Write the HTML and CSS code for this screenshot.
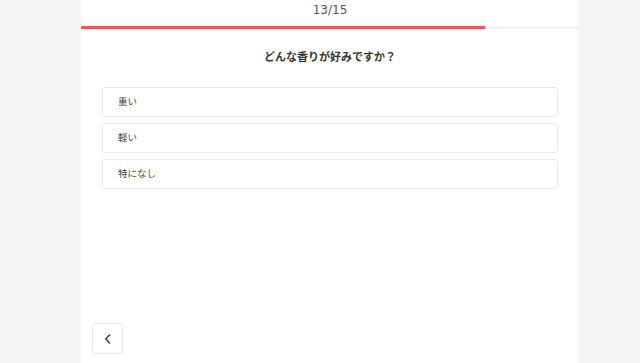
FILE: index.html
```html
<!DOCTYPE html>
<html lang="ja">
<head>
<meta charset="utf-8">
<link rel="stylesheet" href="styles.css">
</head>
<body>
<div class="panel">
  <div class="counter">13/15</div>
  <div class="track"><div class="fill" style="width:81.2%"></div></div>
  <h1 class="question">どんな香りが好みですか？</h1>
  <ul class="options">
    <li class="option">重い</li>
    <li class="option">軽い</li>
    <li class="option">特になし</li>
  </ul>
  <div class="spacer"></div>
  <div class="footer">
    <button class="back" aria-label="戻る">
      <svg width="10" height="12" viewBox="0 0 10 12"><path d="M7 1.5 L2.8 6 L7 10.5" fill="none" stroke="#444" stroke-width="1.5"/></svg>
    </button>
  </div>
</div>
</body>
</html>
```
FILE: styles.css
```css
html, body {
  margin: 0;
  padding: 0;
  height: 100%;
}
body {
  background: #f5f3f4;
  font-family: "DejaVu Sans", "Noto Sans CJK JP", sans-serif;
  color: #333;
}
.panel {
  margin-left: 81px;
  width: 498px;
  height: 363px;
  background: #fff;
  display: flex;
  flex-direction: column;
}
.counter {
  height: 26px;
  line-height: 20px;
  text-align: center;
  font-size: 12px;
  color: #555;
}
.track {
  height: 3px;
  background: #f3f3f3;
}
.fill {
  height: 100%;
  background: #f5535b;
}
.question {
  margin: 19px 0 0;
  font-family: "Noto Sans CJK JP", sans-serif;
  font-size: 11px;
  font-weight: bold;
  text-align: center;
  color: #333;
  line-height: 16px;
}
.options {
  list-style: none;
  margin: 23px 21px 0 21px;
  padding: 0;
  display: flex;
  flex-direction: column;
  gap: 6px;
}
.option {
  height: 30px;
  box-sizing: border-box;
  border: 1px solid #e8e8e8;
  border-radius: 3px;
  padding-left: 15px;
  font-family: "Noto Sans CJK JP", sans-serif;
  font-size: 9.5px;
  color: #444;
  line-height: 27px;
}
.spacer {
  flex: 1;
}
.footer {
  padding: 0 0 9px 11px;
}
.back {
  width: 31px;
  height: 31px;
  border: 1px solid #e8e8e8;
  border-radius: 3px;
  background: #fff;
  padding: 0;
  display: flex;
  align-items: center;
  justify-content: center;
}
```
